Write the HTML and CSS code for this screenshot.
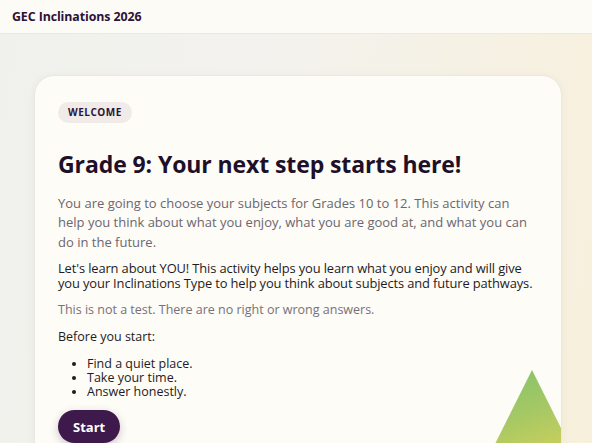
FILE: index.html
```html
<!DOCTYPE html>
<html lang="en">
<head>
<meta charset="utf-8">
<title>GEC Inclinations 2026</title>
<link rel="stylesheet" href="styles.css">
</head>
<body>
<header class="topbar">
  <div class="brand">GEC Inclinations 2026</div>
</header>
<main class="page">
  <section class="card">
    <span class="badge">WELCOME</span>
    <h1 class="title">Grade 9: Your next step starts here!</h1>
    <p class="lead">You are going to choose your subjects for Grades 10 to 12. This activity can help you think about what you enjoy, what you are good at, and what you can do in the future.</p>
    <p class="intro">Let's learn about YOU! This activity helps you learn what you enjoy and will give you your Inclinations Type to help you think about subjects and future pathways.</p>
    <p class="note">This is not a test. There are no right or wrong answers.</p>
    <p class="before">Before you start:</p>
    <ul class="tips">
      <li>Find a quiet place.</li>
      <li>Take your time.</li>
      <li>Answer honestly.</li>
    </ul>
    <button class="start">Start</button>
    <div class="tri"></div>
  </section>
</main>
</body>
</html>
```
FILE: styles.css
```css
* { box-sizing: border-box; }
html, body { margin: 0; height: 100%; }
body {
  font-family: "Open Sans", "DejaVu Sans", sans-serif;
  background: linear-gradient(100deg, #f0f1ec 0%, #f3f2ee 40%, #f8f0dc 100%);
  overflow: hidden;
  color: #1f1029;
}
.topbar {
  height: 34px;
  background: #fdfbf6;
  border-bottom: 1px solid #ebe7e2;
  display: flex;
  align-items: center;
  padding-left: 12px;
}
.brand {
  font-size: 12.4px;
  font-weight: 700;
  color: #2b1338;
  letter-spacing: -0.1px;
}
.page {
  padding: 41px 30px 0 34px;
}
.card {
  position: relative;
  overflow: hidden;
  width: 528px;
  height: 420px;
  background: #fdfcf7;
  border: 1px solid #ebe7e1;
  border-radius: 20px;
  padding: 23px 23px 0 23px;
  box-shadow: 0 2px 10px rgba(80, 60, 40, 0.05);
}
.badge {
  display: inline-flex;
  align-items: center;
  height: 21px;
  padding: 0 10px;
  border-radius: 11px;
  background: #f0ebe8;
  color: #2a1438;
  font-size: 10px;
  font-weight: 700;
  letter-spacing: 0.05em;
}
.title {
  margin: 27px 0 0;
  font-size: 23px;
  line-height: 28px;
  font-weight: 700;
  color: #1f1029;
  letter-spacing: -0.1px;
}
.lead {
  width: 476px;
  margin: 16px 0 0;
  font-size: 13px;
  line-height: 19.5px;
  color: #6c6670;
}
.intro {
  width: 482px;
  margin: 9px 0 0;
  font-size: 12.9px;
  line-height: 15px;
  letter-spacing: -0.12px;
  color: #1f1a24;
}
.note {
  margin: 10px 0 0;
  font-size: 12.5px;
  line-height: 17px;
  color: #77717a;
}
.before {
  margin: 10px 0 0;
  font-size: 12.5px;
  line-height: 17px;
  color: #1f1a24;
}
.tips {
  margin: 12px 0 0;
  padding-left: 29px;
  font-size: 12.5px;
  line-height: 14px;
  color: #1f1a24;
}
.start {
  display: block;
  margin-top: 11px;
  height: 33px;
  padding: 0 15px;
  border: 0;
  border-radius: 17px;
  background: #3e1a4c;
  color: #fff;
  font-family: inherit;
  font-size: 13px;
  font-weight: 700;
  box-shadow: 0 3px 8px rgba(62, 26, 76, 0.25);
}
.tri {
  position: absolute;
  left: 460px;
  top: 294px;
  width: 74px;
  height: 74px;
  clip-path: polygon(50% 0, 100% 100%, 0 100%);
  background: linear-gradient(160deg, #86c26a 0%, #a6c864 55%, #c9cf5c 100%);
}
```
